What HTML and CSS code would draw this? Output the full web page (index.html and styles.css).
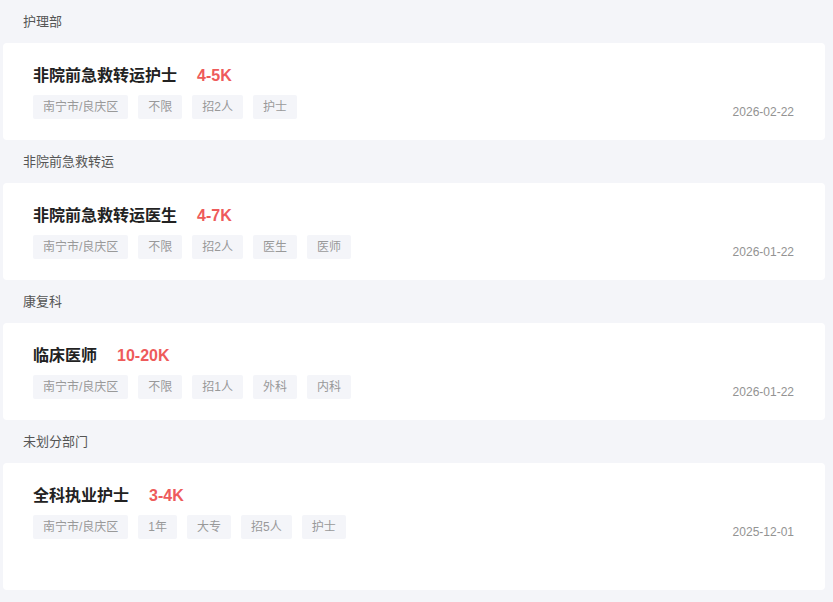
FILE: index.html
```html
<!DOCTYPE html>
<html lang="zh">
<head>
    <meta charset="UTF-8">
    <meta name="viewport" content="width=device-width, initial-scale=1.0">
    <title>职位列表</title>
    <link rel="stylesheet" href="styles.css">
</head>
<body>
    <div class="list">
        <div class="dept">护理部</div>
        <div class="job">
            <div class="job-main">
                <div class="job-head">
                    <span class="job-title">非院前急救转运护士</span>
                    <span class="salary">4-5K</span>
                </div>
                <div class="tags">
                    <span class="tag">南宁市/良庆区</span>
                    <span class="tag">不限</span>
                    <span class="tag">招2人</span>
                    <span class="tag">护士</span>
                </div>
            </div>
            <div class="date">2026-02-22</div>
        </div>

        <div class="dept">非院前急救转运</div>
        <div class="job">
            <div class="job-main">
                <div class="job-head">
                    <span class="job-title">非院前急救转运医生</span>
                    <span class="salary">4-7K</span>
                </div>
                <div class="tags">
                    <span class="tag">南宁市/良庆区</span>
                    <span class="tag">不限</span>
                    <span class="tag">招2人</span>
                    <span class="tag">医生</span>
                    <span class="tag">医师</span>
                </div>
            </div>
            <div class="date">2026-01-22</div>
        </div>

        <div class="dept">康复科</div>
        <div class="job">
            <div class="job-main">
                <div class="job-head">
                    <span class="job-title">临床医师</span>
                    <span class="salary">10-20K</span>
                </div>
                <div class="tags">
                    <span class="tag">南宁市/良庆区</span>
                    <span class="tag">不限</span>
                    <span class="tag">招1人</span>
                    <span class="tag">外科</span>
                    <span class="tag">内科</span>
                </div>
            </div>
            <div class="date">2026-01-22</div>
        </div>

        <div class="dept">未划分部门</div>
        <div class="job job-last">
            <div class="job-main">
                <div class="job-head">
                    <span class="job-title">全科执业护士</span>
                    <span class="salary">3-4K</span>
                </div>
                <div class="tags">
                    <span class="tag">南宁市/良庆区</span>
                    <span class="tag">1年</span>
                    <span class="tag">大专</span>
                    <span class="tag">招5人</span>
                    <span class="tag">护士</span>
                </div>
            </div>
            <div class="date">2025-12-01</div>
        </div>
    </div>
</body>
</html>
```

FILE: styles.css
```css
body {
    margin: 0;
    background-color: #f4f5f9;
    font-family: "Noto Sans CJK SC", "Liberation Sans", sans-serif;
}
.list {
    padding: 0 8px 12px 3px;
}
.dept {
    height: 43px;
    line-height: 42px;
    padding-left: 20px;
    font-size: 13px;
    color: #555;
}
.job {
    display: flex;
    align-items: flex-end;
    justify-content: space-between;
    background: #fff;
    border-radius: 4px;
    padding: 19px 31px 21px 30px;
}
.job-last {
    padding-bottom: 51px;
}
.job-head {
    display: flex;
    align-items: baseline;
    height: 24px;
    line-height: 24px;
    margin-bottom: 9px;
}
.job-title {
    font-size: 16px;
    font-weight: bold;
    color: #222;
}
.salary {
    margin-left: 20px;
    font-family: "Liberation Sans", sans-serif;
    font-size: 16px;
    font-weight: bold;
    color: #ee5b5b;
}
.tags {
    display: flex;
    gap: 10px;
}
.tag {
    height: 24px;
    line-height: 24px;
    padding: 0 10px;
    font-family: "Liberation Sans", "Noto Sans CJK SC", sans-serif;
    font-size: 12px;
    color: #999;
    background: #f4f5f9;
    border-radius: 2px;
}
.date {
    font-family: "Liberation Sans", sans-serif;
    font-size: 12px;
    line-height: 16px;
    color: #939393;
    margin-bottom: -1px;
}
```
